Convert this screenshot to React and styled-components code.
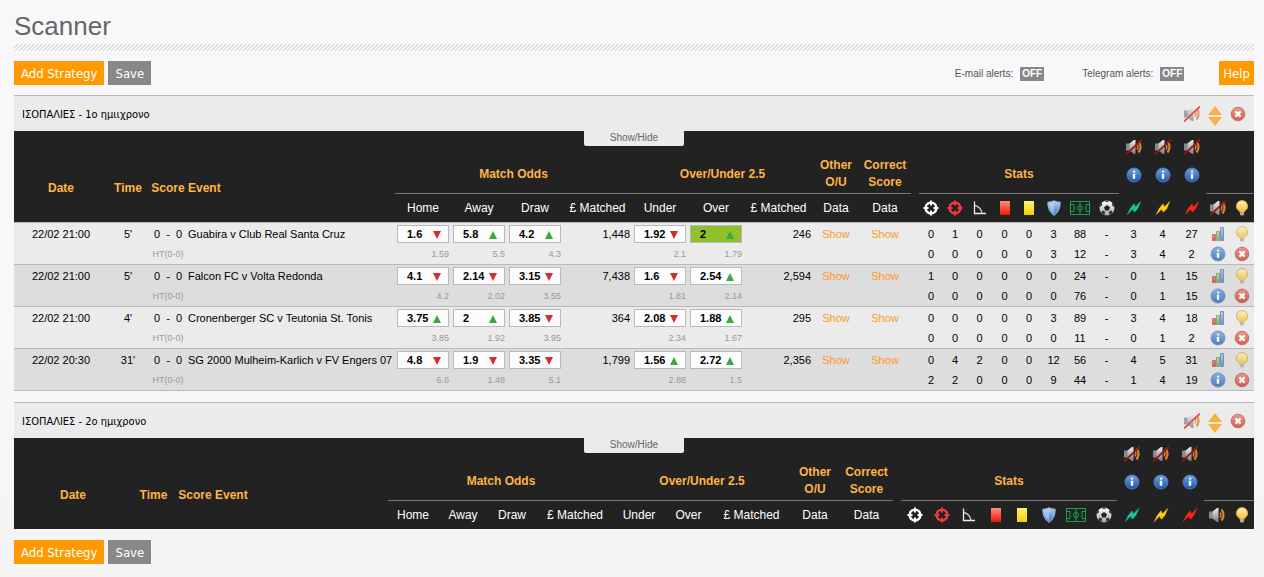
import React from "react";
import styled, { createGlobalStyle, css } from "styled-components";

const GlobalStyle = createGlobalStyle`
*, *::before, *::after {
  box-sizing: border-box;
}

body {
  margin: 0;
  min-height: 100vh;
  background: linear-gradient(#f8f8fa, #f8f8fa 60%, #f4f4f4);
  color: #000;
  font: 11px/14px "Liberation Sans", Arial, sans-serif;
}

button, input {
  font: inherit;
}
`;

const Page = styled.main`
  padding: 12px 10px 12px 14px;
`;

const Title = styled.h1`
  margin: 0 0 4px;
  color: #666;
  font-size: 26px;
  line-height: 28px;
  font-weight: normal;
`;

const Stripes = styled.div`
  height: 7px;
  margin-bottom: 10px;
  background: linear-gradient(135deg, transparent 40%, #ccc 40%, #ccc 60%, transparent 60%) 0 0 / 4px 4px;
`;

const Toolbar = styled.div`
  display: flex;
  align-items: center;
  gap: 4px;
`;

const Button = styled.button`
  height: 24px;
  padding: 1px ${(props) => (props.$compact ? 4 : 7)}px 0;
  border: 0;
  background: ${(props) => (props.$grey ? "#888" : "#ff9900")};
  color: #fff;
  font: 13px/23px "DejaVu Sans Condensed", "Noto Sans", sans-serif;
  cursor: pointer;
`;

const Alerts = styled.div`
  display: flex;
  gap: 38px;
  margin-left: auto;
  margin-right: 31px;
  padding-top: 2px;
`;

const Alert = styled.div`
  display: flex;
  align-items: center;
  gap: 7px;
  color: #555;
  font-size: 10px;
`;

const Toggle = styled.button`
  width: 24px;
  height: 14px;
  padding: 0;
  border: 0;
  background: #888;
  color: #fff;
  font-size: 10px;
  line-height: 14px;
  font-weight: bold;
  cursor: pointer;
`;

const Panel = styled.section`
  margin: 10px 0 11px;
  border-top: 1px solid #b9b9b9;

  & + & {
    margin-top: 11px;
  }
`;

const PanelBar = styled.div`
  display: flex;
  align-items: flex-start;
  gap: 8px;
  height: 35px;
  padding: 10px 8px 0;
  background: #ebebeb;
`;

const NameInput = styled.input`
  flex: 1;
  height: 18px;
  padding: 0;
  border: 0;
  outline: 0;
  background: transparent;
  color: #000;
  font: 11px/18px "DejaVu Sans Condensed", "Noto Sans", sans-serif;
`;

const IconButton = styled.button`
  display: inline-block;
  padding: 0;
  border: 0;
  background: none;
  line-height: 0;
  vertical-align: middle;
  opacity: ${(props) => (props.$faded ? 0.75 : 1)};
  cursor: pointer;
`;

const Sorter = styled.div`
  display: flex;
  flex-direction: column;
  gap: 2px;
`;

const TableWrap = styled.div`
  position: relative;
`;

const ShowHide = styled.button`
  position: absolute;
  top: 0;
  left: 50%;
  width: 100px;
  height: 15px;
  margin-left: -50px;
  padding: 0 0 2px;
  border: 0;
  border-radius: 0 0 2px 2px;
  background: #ebebeb;
  color: #666;
  font-size: 10px;
  line-height: 13px;
  cursor: pointer;
`;

const Table = styled.table`
  width: 100%;
  table-layout: fixed;
  border-collapse: separate;
  border-spacing: 0;
`;

const Head = styled.thead`
  background: #222;
  color: #fff;
  font-size: 12px;

  svg {
    vertical-align: middle;
  }
`;

const HeadRow = styled.tr`
  height: ${(props) => props.$height}px;
`;

const Th = styled.th`
  padding: 0;
  color: #ffb444;
  line-height: 17px;
  text-align: ${(props) => (props.$left ? "left" : "center")};
  vertical-align: ${(props) => (props.$bottom ? "bottom" : "middle")};
  white-space: nowrap;
  ${(props) => props.$line && css`
    border-bottom: 1px solid #777;
  `}
`;

const Label = styled.th`
  padding: 0;
  font-weight: normal;
  white-space: nowrap;
`;

const Match = styled.tbody`
  background: #ebebeb;

  &:nth-of-type(even) {
    background: #ddd;
  }

  tr:first-child td {
    height: 22px;
    border-top: 1px solid #b9b9b9;
  }

  tr:last-child td {
    height: 20px;
  }

  &:last-child tr:last-child td {
    height: 21px;
    border-bottom: 1px solid #b9b9b9;
  }
`;

const Td = styled.td`
  padding: 0;
  line-height: 14px;
  white-space: nowrap;
  text-align: ${(props) => props.$align || "center"};
  ${(props) => props.$align === "right" && css`
    padding-right: 2px;
  `}
  ${(props) => props.$small && css`
    color: #999;
    font-size: 9px;
  `}
`;

const Score = styled.span`
  white-space: pre;
`;

const Odds = styled.button`
  display: flex;
  align-items: center;
  justify-content: space-between;
  width: 52px;
  height: 18px;
  margin: 0 auto;
  padding: 0 7px 0 9px;
  border: 1px solid #b9b9b9;
  background: ${(props) => (props.$hit ? "#8fbf2a" : "#fcfcfc")};
  color: #000;
  font-weight: bold;
  cursor: pointer;

  svg {
    margin-top: 2px;
  }
`;

const ShowLink = styled.a`
  color: #ff9a1a;
  text-decoration: none;
`;

const Defs = styled.svg`
  display: block;
  width: 0;
  height: 0;
`;

function Gradients() {
  const list = [
    ["gMetal", "#f0f0f0", "#7a7a7a"],
    ["gRed", "#ff8f7d", "#f01800"],
    ["gYellow", "#fff27a", "#f6cf00"],
    ["gShield", "#b4d2f7", "#3d76c9"],
    ["gInfo", "#6ea3e0", "#1f56a8"],
    ["gDelete", "#e8806f", "#c3301f"],
    ["gBulb", "#fff6c0", "#edb92c"],
    ["gGreen", "#b9d7a0", "#5f9a48"],
    ["gBlue", "#a8c6f0", "#3f74c4"],
    ["gBall", "#ffffff", "#a5a5a5"],
  ];
  return (
    <Defs aria-hidden="true">
      <defs>
        {list.map(([id, from, to]) => (
          <linearGradient key={id} id={id} x1="0" y1="0" x2="0" y2="1">
            <stop offset="0" stopColor={from} />
            <stop offset="1" stopColor={to} />
          </linearGradient>
        ))}
      </defs>
    </Defs>
  );
}

const Svg = ({ w = 16, h = 16, children }) => (
  <svg width={w} height={h} viewBox={`0 0 ${w} ${h}`} fill="none" aria-hidden="true">
    {children}
  </svg>
);

const SpeakerIcon = ({ muted, slash = "#a01212" }) => (
  <Svg>
    <path d="M0 4.5h4.5v7H0z" fill="#8a8a8a" />
    <path d="M3.5 4.5L8 1h1.5v14H8L3.5 11.5z" fill="url(#gMetal)" />
    <path d="M11 5.5q1.8 2.5 0 5" stroke="#c98a4c" strokeWidth="1.4" />
    <path d="M12.5 2.5q4 5.5 0 11" stroke="#d9822b" strokeWidth="2.2" />
    {muted && <path d="M0 15.5L16 .5" stroke={slash} strokeWidth="1.7" />}
  </Svg>
);

const InfoIcon = () => (
  <Svg>
    <circle cx="8" cy="8" r="7" fill="url(#gInfo)" stroke="#4a7cc2" />
    <path d="M7 3.8h2.2v1.8H7zM6.8 6.8h2.4v5H6.8z" fill="#fff" />
  </Svg>
);

const DeleteIcon = () => (
  <Svg>
    <circle cx="8" cy="8" r="6.8" fill="url(#gDelete)" stroke="#b8493c" />
    <path d="M5.4 5.4l5.2 5.2M10.6 5.4l-5.2 5.2" stroke="#fff" strokeWidth="2.3" />
  </Svg>
);

const TargetIcon = ({ color }) => (
  <Svg>
    <circle cx="8" cy="8" r="5.4" stroke={color} strokeWidth="2.4" />
    <path d="M8 .5v5M8 10.5v5M.5 8h5M10.5 8h5" stroke={color} strokeWidth="2" />
  </Svg>
);

const CornerIcon = () => (
  <Svg>
    <path d="M2.5 1.5v12H14" stroke="#eee" strokeWidth="1.3" />
    <path d="M3 5.5q6 1.5 7 8" stroke="#ccc" strokeWidth="1.3" />
  </Svg>
);

const CardIcon = ({ fill }) => (
  <Svg w={10} h={14}>
    <path d="M0 0h10v14H0z" fill={fill} />
  </Svg>
);

const ShieldIcon = () => (
  <Svg>
    <path d="M8 .8q3 1.6 6.2 1.4Q14.4 11 8 15.4 1.6 11 1.8 2.2 5 2.4 8 .8z" fill="url(#gShield)" stroke="#9dbce6" />
    <path d="M8 2.5V14Q3.4 10.5 3 3.4 6 3.4 8 2.5z" fill="#cfe2fb" opacity=".45" />
  </Svg>
);

const PitchIcon = () => (
  <Svg w={20} h={14}>
    <path d="M.5.5h19v13H.5zM10 .5v13M.5 3.5H4v7H.5M19.5 3.5H16v7h3.5" stroke="#12a84a" />
    <circle cx="10" cy="7" r="2.5" stroke="#12a84a" />
  </Svg>
);

const BallIcon = () => (
  <Svg>
    <circle cx="8" cy="8" r="7.5" fill="url(#gBall)" />
    <path d="M8 5l3 2.2-1.2 3.4H6.2L5 7.2z" fill="#222" />
    <path d="M5.5 1l2.5 1.3L10.5 1Q8 .2 5.500 1zM.6 7L3 5.5 3 2.8Q.8 4.6.6 7zM15.4 7L13 5.5V2.8Q15.2 4.6 15.4 7zM2.5 13l.6-2.4 2.9.9-.5 3.5Q3.6 14.6 2.5 13zM13.5 13l-.6-2.4-2.9.9.5 3.5Q12.4 14.6 13.5 13z" fill="#333" />
  </Svg>
);

const BoltIcon = ({ color }) => (
  <Svg>
    <path d="M.5 15.5L4 8.5 8 3.5 9.5 6.5 15.5.5 12 8.5 8.5 12.5 6.5 9.5z" fill={color} />
  </Svg>
);

const ChartIcon = () => (
  <Svg>
    <path d="M2.5 8.5h3v6h-3z" fill="url(#gDelete)" stroke="#b04a42" />
    <path d="M6.5 5.5h3v9h-3z" fill="url(#gGreen)" stroke="#6d9159" />
    <path d="M10.5 1.5h3v13h-3z" fill="url(#gBlue)" stroke="#5079b4" />
  </Svg>
);

const BulbIcon = () => (
  <Svg>
    <path d="M8 .5a5.6 5.6 0 0 0-3.2 10.2q1 .8 1.2 1.8h4q.2-1 1.2-1.800A5.6 5.6 0 0 0 8 .5z" fill="url(#gBulb)" stroke="#d6a632" />
    <path d="M6 12.5h4v2L9 15.500H7l-1-1z" fill="#aaa" />
  </Svg>
);

const ArrowIcon = ({ down, w = 8, h = 8, color }) => (
  <Svg w={w} h={h}>
    <path d={down ? `M0 0h${w}L${w / 2} ${h}z` : `M0 ${h}h${w}L${w / 2} 0z`} fill={color} />
  </Svg>
);

// the event column takes whatever is left
const liveCols = [94, 40, 40, null, 56, 56, 56, 69, 56, 56, 69, 46, 52, 8, 24, 24, 25, 25, 24, 25, 28, 25, 29, 29, 29, 24, 24];
const emptyCols = [118, 43, 40, null, 50, 50, 48, 78, 50, 49, 77, 50, 53, 8, 27, 27, 27, 27, 26, 27, 28, 27, 29, 29, 29, 25, 25];

const matches = [
  {
    date: "22/02 21:00", time: "5'", score: "0  -  0", ht: "HT(0-0)", event: "Guabira v Club Real Santa Cruz",
    odds: [["1.6", "down", "1.59"], ["5.8", "up", "5.5"], ["4.2", "up", "4.3"]], matched: "1,448",
    goals: [["1.92", "down", "2.1"], ["2", "up", "1.79", true]], goalsMatched: "246",
    home: [0, 1, 0, 0, 0, 3, 88, "-", 3, 4, 27],
    away: [0, 0, 0, 0, 0, 3, 12, "-", 3, 4, 2],
  },
  {
    date: "22/02 21:00", time: "5'", score: "0  -  0", ht: "HT(0-0)", event: "Falcon FC v Volta Redonda",
    odds: [["4.1", "down", "4.2"], ["2.14", "down", "2.02"], ["3.15", "down", "3.55"]], matched: "7,438",
    goals: [["1.6", "down", "1.81"], ["2.54", "up", "2.14"]], goalsMatched: "2,594",
    home: [1, 0, 0, 0, 0, 0, 24, "-", 0, 1, 15],
    away: [0, 0, 0, 0, 0, 0, 76, "-", 0, 1, 15],
  },
  {
    date: "22/02 21:00", time: "4'", score: "0  -  0", ht: "HT(0-0)", event: "Cronenberger SC v Teutonia St. Tonis",
    odds: [["3.75", "up", "3.85"], ["2", "up", "1.92"], ["3.85", "down", "3.95"]], matched: "364",
    goals: [["2.08", "down", "2.34"], ["1.88", "up", "1.67"]], goalsMatched: "295",
    home: [0, 0, 0, 0, 0, 3, 89, "-", 3, 4, 18],
    away: [0, 0, 0, 0, 0, 0, 11, "-", 0, 1, 2],
  },
  {
    date: "22/02 20:30", time: "31'", score: "0  -  0", ht: "HT(0-0)", event: "SG 2000 Mulheim-Karlich v FV Engers 07",
    odds: [["4.8", "down", "6.6"], ["1.9", "down", "1.48"], ["3.35", "down", "5.1"]], matched: "1,799",
    goals: [["1.56", "up", "2.88"], ["2.72", "up", "1.5"]], goalsMatched: "2,356",
    home: [0, 4, 2, 0, 0, 12, 56, "-", 4, 5, 31],
    away: [2, 2, 0, 0, 0, 9, 44, "-", 1, 4, 19],
  },
];

const statIcons = [
  <TargetIcon color="#fff" />,
  <TargetIcon color="#f03a3a" />,
  <CornerIcon />,
  <CardIcon fill="url(#gRed)" />,
  <CardIcon fill="url(#gYellow)" />,
  <ShieldIcon />,
  <PitchIcon />,
  <BallIcon />,
  <BoltIcon color="#10c79a" />,
  <BoltIcon color="#ffc80a" />,
  <BoltIcon color="#ff2510" />,
];

const labels = ["Home", "Away", "Draw", "£ Matched", "Under", "Over", "£ Matched", "Data", "Data"];

function TableHead({ muted }) {
  return (
    <Head>
      <HeadRow $height={24}>
        <Th colSpan={22} />
        {[0, 1, 2].map((i) => (
          <Th key={i} $bottom>
            <IconButton aria-label="Sound off"><SpeakerIcon muted /></IconButton>
          </Th>
        ))}
        <Th colSpan={2} />
      </HeadRow>
      <HeadRow $height={39}>
        <Th rowSpan={2}>Date</Th>
        <Th rowSpan={2}>Time</Th>
        <Th rowSpan={2}>Score</Th>
        <Th rowSpan={2} $left>Event</Th>
        <Th colSpan={4} $line>Match Odds</Th>
        <Th colSpan={3} $line>Over/Under 2.5</Th>
        <Th $line>Other<br />O/U</Th>
        <Th $line>Correct<br />Score</Th>
        <Th />
        <Th colSpan={8} $line>Stats</Th>
        {[0, 1, 2].map((i) => (
          <Th key={i}><InfoIcon /></Th>
        ))}
        <Th colSpan={2} $line />
      </HeadRow>
      <HeadRow $height={28}>
        {labels.map((label, i) => <Label key={i}>{label}</Label>)}
        <Label />
        {statIcons.map((icon, i) => <Label key={i}>{icon}</Label>)}
        <Label><IconButton aria-label="Sound"><SpeakerIcon muted={muted} /></IconButton></Label>
        <Label><BulbIcon /></Label>
      </HeadRow>
    </Head>
  );
}

function OddsCell({ odds: [price, trend, , hit] }) {
  const down = trend === "down";
  return (
    <Td>
      <Odds $hit={hit}>
        {price}
        <ArrowIcon down={down} color={down ? "#d3302b" : "#3aaa3f"} />
      </Odds>
    </Td>
  );
}

function MatchRows({ match }) {
  return (
    <Match>
      <tr>
        <Td>{match.date}</Td>
        <Td>{match.time}</Td>
        <Td><Score>{match.score}</Score></Td>
        <Td $align="left">{match.event}</Td>
        {match.odds.map((odds, i) => <OddsCell key={i} odds={odds} />)}
        <Td $align="right">{match.matched}</Td>
        {match.goals.map((odds, i) => <OddsCell key={i} odds={odds} />)}
        <Td $align="right">{match.goalsMatched}</Td>
        <Td><ShowLink href="#other">Show</ShowLink></Td>
        <Td><ShowLink href="#score">Show</ShowLink></Td>
        <Td />
        {match.home.map((n, i) => <Td key={i}>{n}</Td>)}
        <Td><IconButton $faded aria-label="Chart"><ChartIcon /></IconButton></Td>
        <Td><IconButton $faded aria-label="Highlight"><BulbIcon /></IconButton></Td>
      </tr>
      <tr>
        <Td colSpan={2} />
        <Td $small>{match.ht}</Td>
        <Td />
        {match.odds.map((odds, i) => <Td key={i} $small $align="right">{odds[2]}</Td>)}
        <Td />
        {match.goals.map((odds, i) => <Td key={i} $small $align="right">{odds[2]}</Td>)}
        <Td colSpan={4} />
        {match.away.map((n, i) => <Td key={i}>{n}</Td>)}
        <Td><IconButton $faded aria-label="Info"><InfoIcon /></IconButton></Td>
        <Td><IconButton $faded aria-label="Remove"><DeleteIcon /></IconButton></Td>
      </tr>
    </Match>
  );
}

function Strategy({ name, cols, rows, muted, autoFocus }) {
  return (
    <Panel>
      <PanelBar>
        <NameInput aria-label="Strategy name" defaultValue={name} autoFocus={autoFocus} />
        <IconButton $faded aria-label="Mute strategy"><SpeakerIcon muted slash="#e01818" /></IconButton>
        <Sorter>
          <IconButton aria-label="Move up"><ArrowIcon w={14} h={9} color="#fbb040" /></IconButton>
          <IconButton aria-label="Move down"><ArrowIcon down w={14} h={9} color="#fbb040" /></IconButton>
        </Sorter>
        <IconButton $faded aria-label="Delete strategy"><DeleteIcon /></IconButton>
      </PanelBar>
      <TableWrap>
        <Table>
          <colgroup>
            {cols.map((width, i) => <col key={i} width={width || undefined} />)}
          </colgroup>
          <TableHead muted={muted} />
          {rows.map((match) => <MatchRows key={match.event} match={match} />)}
        </Table>
        <ShowHide>Show/Hide</ShowHide>
      </TableWrap>
    </Panel>
  );
}

export default function App() {
  return (
    <Page>
      <GlobalStyle />
      <Gradients />
      <Title>Scanner</Title>
      <Stripes />
      <Toolbar>
        <Button>Add Strategy</Button>
        <Button $grey>Save</Button>
        <Alerts>
          <Alert>
            <span id="email-alerts">E-mail alerts:</span>
            <Toggle aria-describedby="email-alerts">OFF</Toggle>
          </Alert>
          <Alert>
            <span id="telegram-alerts">Telegram alerts:</span>
            <Toggle aria-describedby="telegram-alerts">OFF</Toggle>
          </Alert>
        </Alerts>
        <Button $compact>Help</Button>
      </Toolbar>
      <Strategy name="ΙΣΟΠΑΛΙΕΣ - 1ο ημιιχρονο" cols={liveCols} rows={matches} muted />
      <Strategy name="ΙΣΟΠΑΛΙΕΣ - 2ο ημιχρονο" cols={emptyCols} rows={[]} autoFocus />
      <Toolbar>
        <Button>Add Strategy</Button>
        <Button $grey>Save</Button>
      </Toolbar>
    </Page>
  );
}
